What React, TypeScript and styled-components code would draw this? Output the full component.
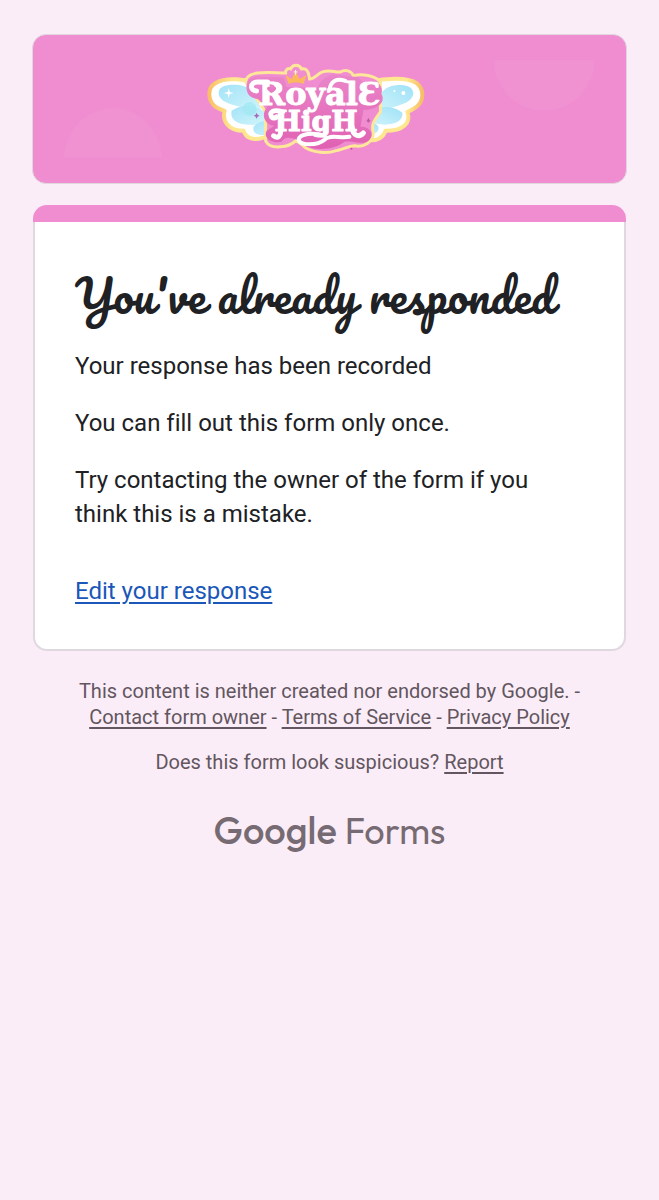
import React from 'react';
import styled, { createGlobalStyle } from 'styled-components';

const colors = {
  page: '#fbedf7',
  accent: '#ef8dd0',
  card: '#ffffff',
  line: '#dfd8df',
  text: '#202124',
  link: '#1a57b8',
  muted: '#62565f',
  logo: '#776b73',
};

const GlobalStyle = createGlobalStyle`
  * {
    box-sizing: border-box;
  }

  body {
    margin: 0;
    background: ${colors.page};
    color: ${colors.text};
    font-family: Roboto, 'Liberation Sans', sans-serif;
    font-variant-ligatures: none;
  }
`;

// --- Styled Components ---

const Page = styled.main`
  display: flex;
  flex-direction: column;
  gap: 21px;
  min-height: 100vh;
  padding: 34px 32px;
`;

const Banner = styled.header`
  border: 1px solid ${colors.line};
  border-radius: 14px;
  background: ${colors.accent};
  overflow: hidden;
`;

const BannerArt = styled.svg`
  display: block;
  width: 100%;
  height: auto;
`;

const LogoText = styled.text`
  font-family: 'DejaVu Serif', serif;
  font-weight: 700;
  fill: #ffffff;
  stroke: #ffffff;
  stroke-width: 1px;
  stroke-linejoin: round;
`;

const Card = styled.section`
  margin: 0 1px;
`;

const CardBar = styled.div`
  height: 17px;
  border-radius: 14px 14px 0 0;
  background: ${colors.accent};
`;

const CardBody = styled.div`
  border: 2px solid ${colors.line};
  border-top: 0;
  border-radius: 0 0 14px 14px;
  background: ${colors.card};
  padding: 38px 40px 41px;
`;

const Title = styled.h1`
  margin: 0 0 20px;
  font-family: Pacifico, 'Liberation Serif', cursive;
  font-size: 45px;
  font-weight: 400;
  line-height: 69px;
`;

const Message = styled.p`
  margin: 0 0 23px;
  font-size: 24px;
  line-height: 34px;
`;

const EditLink = styled.a`
  display: inline-block;
  margin-top: 20px;
  color: ${colors.link};
  font-size: 24px;
  line-height: 34px;
  text-underline-offset: 3px;
`;

const Footer = styled.footer`
  display: flex;
  flex-direction: column;
  align-items: center;
  gap: 19px;
  padding: 6px 40px;
  color: ${colors.muted};
  text-align: center;
`;

const Notice = styled.p`
  margin: 0;
  font-size: 20px;
  line-height: 26px;
`;

const FooterLink = styled.a`
  color: inherit;
  text-underline-offset: 3px;
`;

const FormsLogo = styled.a`
  display: flex;
  align-items: baseline;
  gap: 8px;
  margin-top: 12px;
  color: ${colors.logo};
  font-family: 'Product Sans', 'Google Sans', Outfit, Lato, sans-serif;
  line-height: 48px;
  text-decoration: none;
`;

const LogoName = styled.span<{ $strong?: boolean }>`
  font-size: ${({ $strong }) => ($strong ? 38 : 36)}px;
  font-weight: ${({ $strong }) => ($strong ? 500 : 400)};
`;

// --- Header artwork ---

function HeaderArt() {
  return (
    <BannerArt viewBox="33 35 594 148" role="img" aria-label="Royale High">
      <defs>
        <linearGradient id="plate" x1="0" y1="0" x2="0" y2="1">
          <stop offset="0" stopColor="#ea86ca" />
          <stop offset="1" stopColor="#e061b2" />
        </linearGradient>
        <linearGradient id="gold" x1="0" y1="0" x2="1" y2="0">
          <stop offset="0" stopColor="#f9bf68" />
          <stop offset="0.25" stopColor="#ffe78f" />
          <stop offset="0.8" stopColor="#ffe78f" />
          <stop offset="1" stopColor="#f8bd69" />
        </linearGradient>
        <linearGradient id="wing" x1="0" y1="0" x2="1" y2="1">
          <stop offset="0" stopColor="#a3e3f8" />
          <stop offset="1" stopColor="#d2f5fa" />
        </linearGradient>
        <linearGradient id="wingRight" x1="1" y1="0" x2="0" y2="1">
          <stop offset="0" stopColor="#9fe1f8" />
          <stop offset="1" stopColor="#d2f5fa" />
        </linearGradient>
      </defs>

      <path d="M64 158C65 129 87 108 113 108C139 108 161 129 162 158Z" fill="#f091d2" />
      <path d="M494 60H596C595 89 572 111 545 111C518 111 495 89 494 60Z" fill="#f091d2" />

      {/* wings */}
      <g fill="#ffffff" stroke="url(#gold)" strokeWidth="4" strokeLinejoin="round">
        <path d="M262 84C246 79 226 77 216 83C207 88 208 101 216 107C219 109 222 110 225 111C222 121 229 131 244 131C246 138 254 141 263 138L300 128Z" />
        <path d="M370 82C386 78 408 77 417 83C426 90 424 102 417 107C414 109 411 111 408 112C412 123 404 131 386 131C384 138 376 142 368 140L345 128Z" />
      </g>
      <g fill="url(#wing)">
        <path d="M219 94C218 86 228 84 239 85C248 86 255 91 258 98L262 112C240 106 221 105 219 94Z" />
        <path d="M232 111C242 103 256 106 265 112L266 124C246 127 229 124 232 111Z" />
        <path d="M254 127C260 119 272 120 278 125L268 135C260 136 252 134 254 127Z" />
      </g>
      <g fill="url(#wingRight)">
        <path d="M414 93C413 85 402 84 392 86C385 88 381 93 379 99L373 111C397 107 413 104 414 93Z" />
        <path d="M403 113C394 105 381 106 373 111L367 122C389 128 404 124 403 113Z" />
        <path d="M379 127C374 120 365 121 360 126L367 135C374 135 380 133 379 127Z" />
      </g>
      <circle cx="250" cy="109" r="7" fill="#9ee8f2" opacity="0.7" />
      <path d="M229 88L230 92L234 93L230 94L229 98L228 94L224 93L228 92Z" fill="#ffffff" />
      <circle cx="404" cy="93" r="2" fill="#ffffff" />
      <circle cx="395" cy="91" r="1" fill="#ffffff" />

      {/* outline around the lettering */}
      <path
        d="M246 82C246 76 251 74 258 73C268 72 277 73 286 73C286 69 289 68 291 69C293 64 300 64 302 69C307 68 309 71 310 79C316 79 317 74 323 72C331 69 336 73 341 72C346 69 352 71 354 76C362 73 376 76 381 82V112C376 119 371 124 374 133C374 142 364 148 355 146C350 146 342 150 336 151C328 154 314 153 306 148C302 145 300 142 296 141C290 147 271 151 266 141V112Z"
        fill="#ef8dd0"
        stroke="#ffe79a"
        strokeWidth="3"
      />
      {/* pink shape that hugs the letters */}
      <path
        d="M247 85C248 77 256 76 264 77H284L287 87L318 88C322 77 333 71 345 76L359 77L364 83C374 77 385 84 382 94C387 103 377 110 364 110L361 127C370 126 376 135 369 141C362 146 355 140 345 142C335 151 307 153 298 140C291 138 286 136 282 142C274 144 263 139 267 131L275 126C264 125 261 113 268 107L258 99C249 98 246 92 247 85Z"
        fill="url(#plate)"
      />
      <LogoText>
        <tspan x="259" y="105" fontSize="32">RoyalƐ</tspan>
        <tspan x="275" y="131" fontSize="28">HigH</tspan>
      </LogoText>

      {/* swashes */}
      <g fill="none" stroke="#ffffff" strokeWidth="5" strokeLinecap="round">
        <path d="M268 82H258C250 82 250 91 257 91" />
        <path d="M283 112C274 109 269 112 272 117C274 119 276 118 277 117" />
        <path d="M281 128C282 137 278 139 274 136" />
        <path d="M353 128C353 136 360 138 364 133" />
        <path d="M330 90C331 81 337 78 346 81" strokeWidth="4" />
        <path d="M325 136C314 132 300 134 299 140C301 146 318 146 325 140C331 134 340 139 350 137" strokeWidth="4" />
      </g>
      <path d="M286 75L292 79L296 71L300 79L307 75L304 84C299 82 293 82 289 84Z" fill="#fbb85e" />
      <path d="M296 70V75M294 72H298" stroke="#fff5da" strokeWidth="1" />
      <path d="M272 89C270 85 266 87 268 90L272 93L276 90C278 87 274 85 272 89Z" fill="#e77bc3" />
      <path d="M257 113L258 115L260 116L258 117L257 119L256 117L254 116L256 115Z" fill="#a86bb9" />
      <path d="M369 118L370 120L371 121L370 122L369 123L368 122L367 121L368 120Z" fill="#c05b9d" />
      <circle cx="352" cy="149" r="1" fill="#d6489f" />
    </BannerArt>
  );
}

// --- App ---

export default function App() {
  return (
    <>
      <GlobalStyle />
      <Page>
        <Banner>
          <HeaderArt />
        </Banner>
        <Card>
          <CardBar />
          <CardBody>
            <Title>You've already responded</Title>
            <Message>Your response has been recorded</Message>
            <Message>You can fill out this form only once.</Message>
            <Message>Try contacting the owner of the form if you think this is a mistake.</Message>
            <EditLink href="#edit">Edit your response</EditLink>
          </CardBody>
        </Card>
        <Footer>
          <Notice>
            This content is neither created nor endorsed by Google. -{' '}
            <FooterLink href="#contact">Contact form owner</FooterLink> -{' '}
            <FooterLink href="#terms">Terms of Service</FooterLink> -{' '}
            <FooterLink href="#privacy">Privacy Policy</FooterLink>
          </Notice>
          <Notice>
            Does this form look suspicious? <FooterLink href="#report">Report</FooterLink>
          </Notice>
          <FormsLogo href="#forms">
            <LogoName $strong>Google</LogoName>
            <LogoName>Forms</LogoName>
          </FormsLogo>
        </Footer>
      </Page>
    </>
  );
}
